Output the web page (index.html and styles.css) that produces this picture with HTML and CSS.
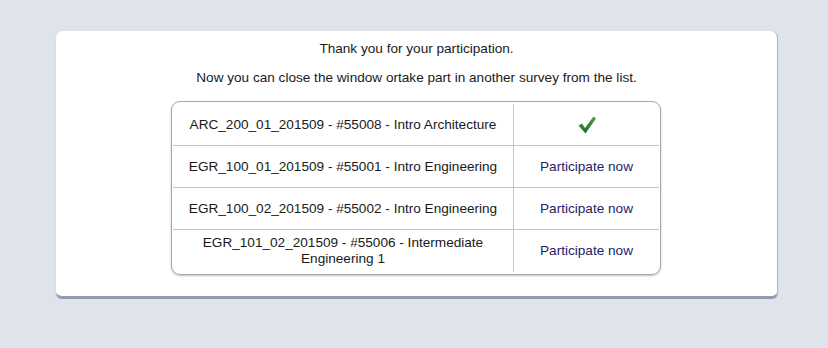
FILE: index.html
```html
<!DOCTYPE html>
<html>
<head>
<meta charset="utf-8">
<link rel="stylesheet" href="styles.css">
</head>
<body>
<div class="card">
  <p class="msg">Thank you for your participation.</p>
  <p class="msg msg2">Now you can close the window ortake part in another survey from the list.</p>
  <div class="surveys">
    <div class="cell name">ARC_200_01_201509 - #55008 - Intro Architecture</div>
    <div class="cell action">
      <svg class="check" width="20" height="20" viewBox="0 0 20 20">
        <defs>
          <linearGradient id="g" x1="0" y1="0" x2="0" y2="1">
            <stop offset="0" stop-color="#4aa04a"/>
            <stop offset="1" stop-color="#1f6a2c"/>
          </linearGradient>
        </defs>
        <path d="M1.5 10.5 L5 8.5 L8 13 L16.5 1.5 L19 3.5 L8.5 18.5 Z" fill="url(#g)"/>
      </svg>
    </div>
    <div class="cell name row">EGR_100_01_201509 - #55001 - Intro Engineering</div>
    <div class="cell action row"><a href="#">Participate now</a></div>
    <div class="cell name row">EGR_100_02_201509 - #55002 - Intro Engineering</div>
    <div class="cell action row"><a href="#">Participate now</a></div>
    <div class="cell name row last">EGR_101_02_201509 - #55006 - Intermediate Engineering 1</div>
    <div class="cell action row last"><a href="#">Participate now</a></div>
  </div>
</div>
</body>
</html>
```

FILE: styles.css
```css
html, body {
  margin: 0;
  padding: 0;
  background: #dfe3eb;
}
body {
  padding-top: 31px;
  font-family: "Liberation Sans", Arial, sans-serif;
  font-size: 13.6px;
  line-height: 16px;
  color: #1a1a1a;
}
.card {
  margin-left: 56px;
  width: 722px;
  height: 268px;
  box-sizing: border-box;
  background: #fff;
  border-radius: 7px;
  padding-top: 10px;
  border-right: 1px solid #aab4c3;
  border-bottom: 3px solid #8f9cb1;
  box-shadow: 0 1px 1px rgba(140, 155, 178, 0.5);
}
.msg {
  margin: 0;
  text-align: center;
}
.msg2 {
  margin-top: 13px;
}
.surveys {
  margin: 15px 0 0 115px;
  width: 490px;
  box-sizing: border-box;
  border: 1px solid #a9a9a9;
  border-radius: 9px;
  padding: 2px 1px;
  display: grid;
  grid-template-columns: 340px 146px;
  box-shadow: 0 1px 2px rgba(0, 0, 0, 0.25);
}
.cell {
  box-sizing: border-box;
  min-height: 41px;
  display: flex;
  align-items: center;
  justify-content: center;
  text-align: center;
}
.name {
  padding: 0 8px;
}
.action {
  border-left: 1px solid #c4c4c4;
}
.row {
  border-top: 1px solid #c4c4c4;
  min-height: 42px;
}
.row.last {
  min-height: 43px;
}
.action a {
  color: #23236b;
  text-decoration: none;
}
.check {
  display: block;
}
```
